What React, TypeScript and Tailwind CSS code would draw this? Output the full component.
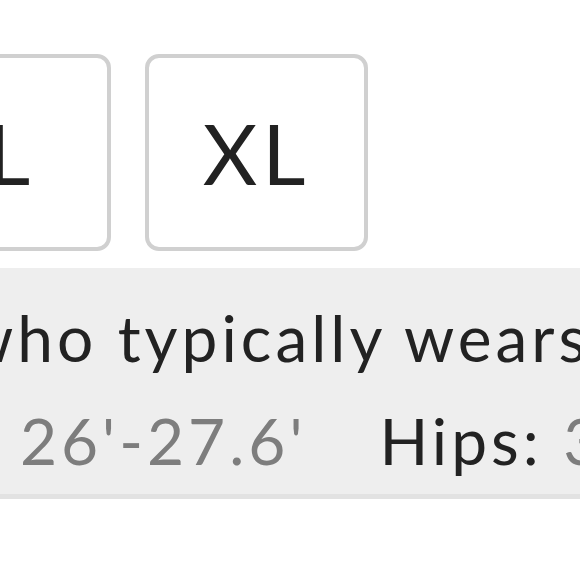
export default function App() {
  const sizes = [
    { label: "L", width: "w-[200px]" },
    { label: "XL", width: "w-[223px]" },
  ];

  return (
    <div className="w-[580px] h-[580px] overflow-hidden bg-white font-['Lato',sans-serif] text-[#222222]">
      {/* size buttons */}
      <div className="flex gap-[34px] pt-[54px] -ml-[89px]">
        {sizes.map((s) => (
          <button
            key={s.label}
            className={`${s.width} h-[197px] shrink-0 flex items-center justify-center border-4 border-[#d0d0d0] rounded-[14px] bg-white text-[84px] leading-none tracking-[0.06em]`}
          >
            {s.label}
          </button>
        ))}
      </div>

      {/* fit note */}
      <div className="mt-[17px] h-[231px] bg-[#eeeeee] border-b-[5px] border-[#e2e2e2] pt-[31px] text-[64px] leading-[77px] tracking-[0.0625em] whitespace-nowrap">
        <p className="-ml-[37px]">who typically wears size S</p>
        <div className="mt-[26px] flex gap-[73px] -ml-[201px]">
          <span>
            Waist: <span className="text-[#7d7d7d]">26'-27.6'</span>
          </span>
          <span>
            Hips: <span className="text-[#7d7d7d]">35'-37'</span>
          </span>
        </div>
      </div>
    </div>
  );
}
